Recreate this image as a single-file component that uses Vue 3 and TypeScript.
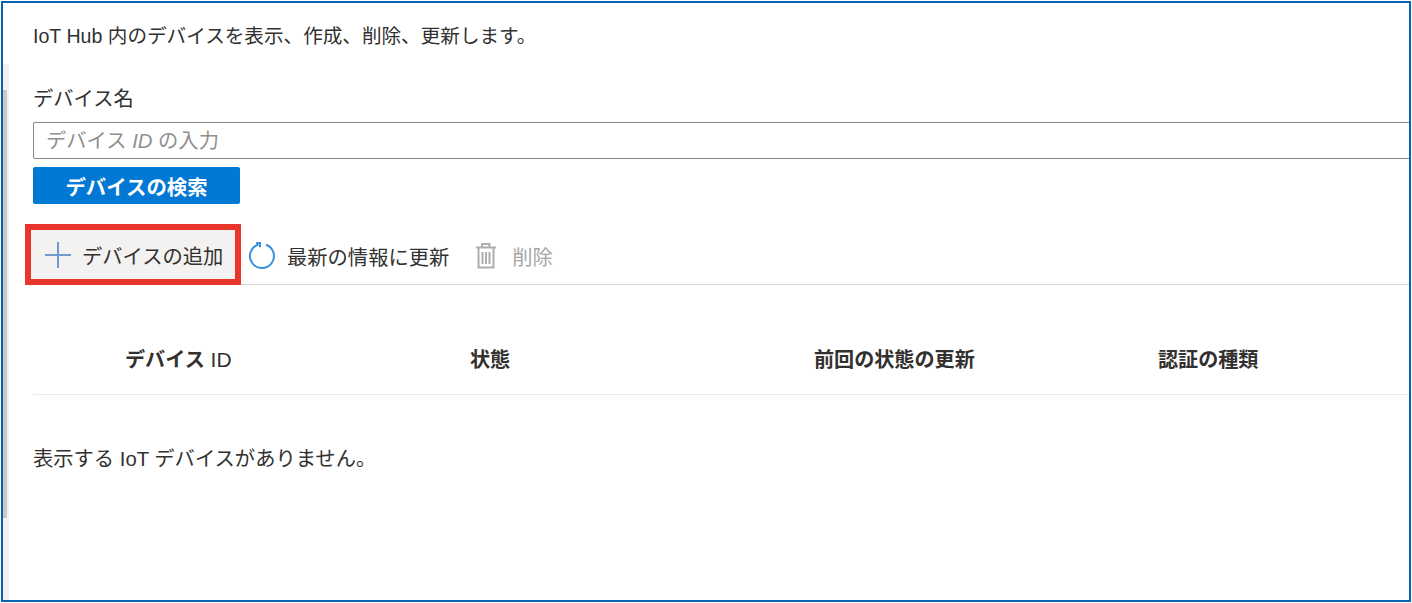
<script setup lang="ts">
const columns: { label: string; latin?: string; width: number }[] = [
  { label: 'デバイス', latin: ' ID', width: 345 },
  { label: '状態', width: 344 },
  { label: '前回の状態の更新', width: 344 },
  { label: '認証の種類', width: 200 },
]
</script>

<template>
  <div class="frame">
    <div class="scrollbar"><div class="thumb"></div></div>
    <main class="content">
      <p class="intro">IoT Hub 内のデバイスを表示、作成、削除、更新します。</p>
      <div class="field-label">デバイス名</div>
      <div class="field">デバイス <i>ID</i> の入力</div>
      <button class="search">デバイスの検索</button>
      <div class="toolbar">
        <button class="tool add">
          <svg width="28" height="28" viewBox="0 0 28 28"><path d="M14 1V27M1 14H27" stroke="#6f9bd1" stroke-width="2" fill="none" /></svg>
          <span>デバイスの追加</span>
        </button>
        <button class="tool refresh">
          <svg width="28" height="28" viewBox="0 0 28 28" fill="none" stroke="#3a8fdc" stroke-width="2"><path d="M10.500 2.500A12 12 0 1 0 18 2.700" /><path d="M8 1.300L12 0.800V5.300" /></svg>
          <span>最新の情報に更新</span>
        </button>
        <button class="tool trash">
          <svg width="22" height="28" viewBox="0 0 22 28" fill="none" stroke="#aeaeae" stroke-width="2"><path d="M1 5.500H21M7 5V2H14.500V5M3.500 6V25.500H18.500V6M7.500 10V22M11 10V22M14.500 10V22" /></svg>
          <span>削除</span>
        </button>
      </div>
      <div class="head">
        <div v-for="c in columns" :key="c.label" class="cell" :style="{ width: c.width + 'px' }">
          {{ c.label }}<span v-if="c.latin" class="latin">{{ c.latin }}</span>
        </div>
      </div>
      <p class="empty">表示する IoT デバイスがありません。</p>
    </main>
  </div>
</template>

<style>
html, body { margin: 0; background: #fff; }
</style>

<style scoped>
.frame {
  box-sizing: border-box;
  width: 1410px;
  height: 601px;
  margin: 1px;
  border: 2px solid #0563b4;
  display: flex;
  overflow: hidden;
  background: #fff;
  font-family: "Liberation Sans", "Noto Sans CJK JP", sans-serif;
  color: #323130;
}
.scrollbar {
  width: 6px;
  margin-top: 61px;
  background: #f1f1f1;
  flex: none;
  padding-top: 26px;
}
.thumb { width: 4px; height: 428px; background: #c9c9c9; }
.content {
  flex: 1;
  min-width: 0;
  padding-left: 24px;
  display: flex;
  flex-direction: column;
  align-items: flex-start;
}
.intro { margin: 21px 0 0; font-size: 19.6px; line-height: 24px; }
.field-label { margin-top: 37px; font-size: 20.3px; line-height: 28px; }
.field {
  box-sizing: border-box;
  width: 100%;
  height: 37px;
  line-height: 37px;
  margin-top: 9px;
  border: 1px solid #8a8886;
  border-right: none;
  border-radius: 2px 0 0 2px;
  padding: 0 12px;
  font-size: 20.3px;
  color: #918f8d;
}
.search {
  width: 207px;
  height: 37px;
  margin-top: 8px;
  border: none;
  border-radius: 2px;
  background: #0078d4;
  color: #fff;
  font: inherit;
  font-size: 20.4px;
  font-weight: 700;
}
.toolbar {
  display: flex;
  align-items: stretch;
  width: 100%;
  height: 56px;
  margin-top: 24px;
  border-bottom: 1px solid #d4d4d4;
  box-sizing: content-box;
}
.tool {
  display: flex;
  align-items: center;
  border: none;
  background: none;
  padding: 0 0 1px;
  font: inherit;
  font-size: 20.3px;
  color: #323130;
}
.add {
  box-sizing: border-box;
  width: 216px;
  height: 61px;
  margin: -4px 0 0 -8px;
  padding: 0 0 0 13px;
  gap: 10px;
  background: #f3f2f1;
  border: 6px solid #e8362d;
}
.refresh { margin-left: 7px; gap: 11px; }
.trash { margin-left: 26px; gap: 15px; color: #a6a6a6; }
.head {
  display: flex;
  width: 100%;
  height: 110px;
  border-bottom: 1px solid #edebe9;
  box-sizing: border-box;
}
.cell {
  box-sizing: border-box;
  padding: 59px 0 0 92px;
  font-size: 20.1px;
  font-weight: 700;
  line-height: 32px;
  white-space: pre;
}
.latin { font-size: 21px; font-weight: 400; }
.empty { margin: 50px 0 0; font-size: 20.3px; line-height: 28px; }
</style>
